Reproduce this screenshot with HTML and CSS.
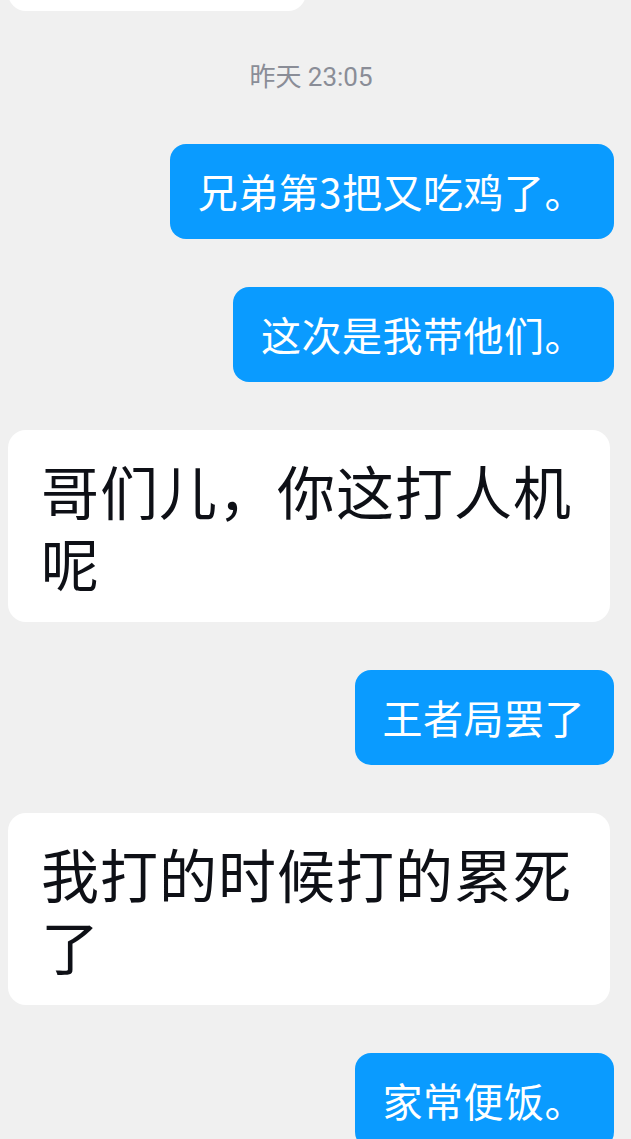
FILE: index.html
```html
<!DOCTYPE html>
<html lang="zh-CN">
<head>
    <meta charset="UTF-8">
    <meta name="viewport" content="width=device-width, initial-scale=1.0">
    <title>聊天</title>
    <link rel="stylesheet" href="styles.css">
</head>
<body>
    <main class="chat">
        <div class="msg msg-in stub"></div>
        <p class="time">昨天 23:05</p>
        <div class="msg msg-out">兄弟第3把又吃鸡了。</div>
        <div class="msg msg-out">这次是我带他们。</div>
        <div class="msg msg-in">哥们儿，你这打人机呢</div>
        <div class="msg msg-out">王者局罢了</div>
        <div class="msg msg-in">我打的时候打的累死了</div>
        <div class="msg msg-out">家常便饭。</div>
    </main>
</body>
</html>
```

FILE: styles.css
```css
html, body {
    margin: 0;
    height: 1139px;
    overflow: hidden;
}
body {
    background-color: #f0f0f0;
    font-family: "Noto Sans CJK SC", "Noto Sans", sans-serif;
}
.chat {
    display: flex;
    flex-direction: column;
    gap: 48px;
    padding: 0 17px 0 8px;
}
.time {
    margin: 0;
    text-align: center;
    font-family: Roboto, "Noto Sans CJK SC", sans-serif;
    font-size: 26px;
    line-height: 37px;
    color: #8a8d97;
}
.msg {
    box-sizing: border-box;
    word-break: break-all;
}
.msg-out {
    align-self: flex-end;
    background-color: #0a9bff;
    color: #fff;
    border-radius: 16px;
    padding: 23px 29px 24px 28px;
    font-size: 40px;
    line-height: 48px;
    letter-spacing: 0.5px;
}
.msg-in {
    align-self: flex-start;
    max-width: 602px;
    background-color: #fff;
    color: #0e1016;
    border-radius: 18px;
    padding: 24px 30px 24px 33px;
    font-size: 58px;
    line-height: 72px;
    letter-spacing: 1px;
}
.stub {
    width: 298px;
    height: 60px;
    margin-top: -49px;
    padding: 0;
}
```
